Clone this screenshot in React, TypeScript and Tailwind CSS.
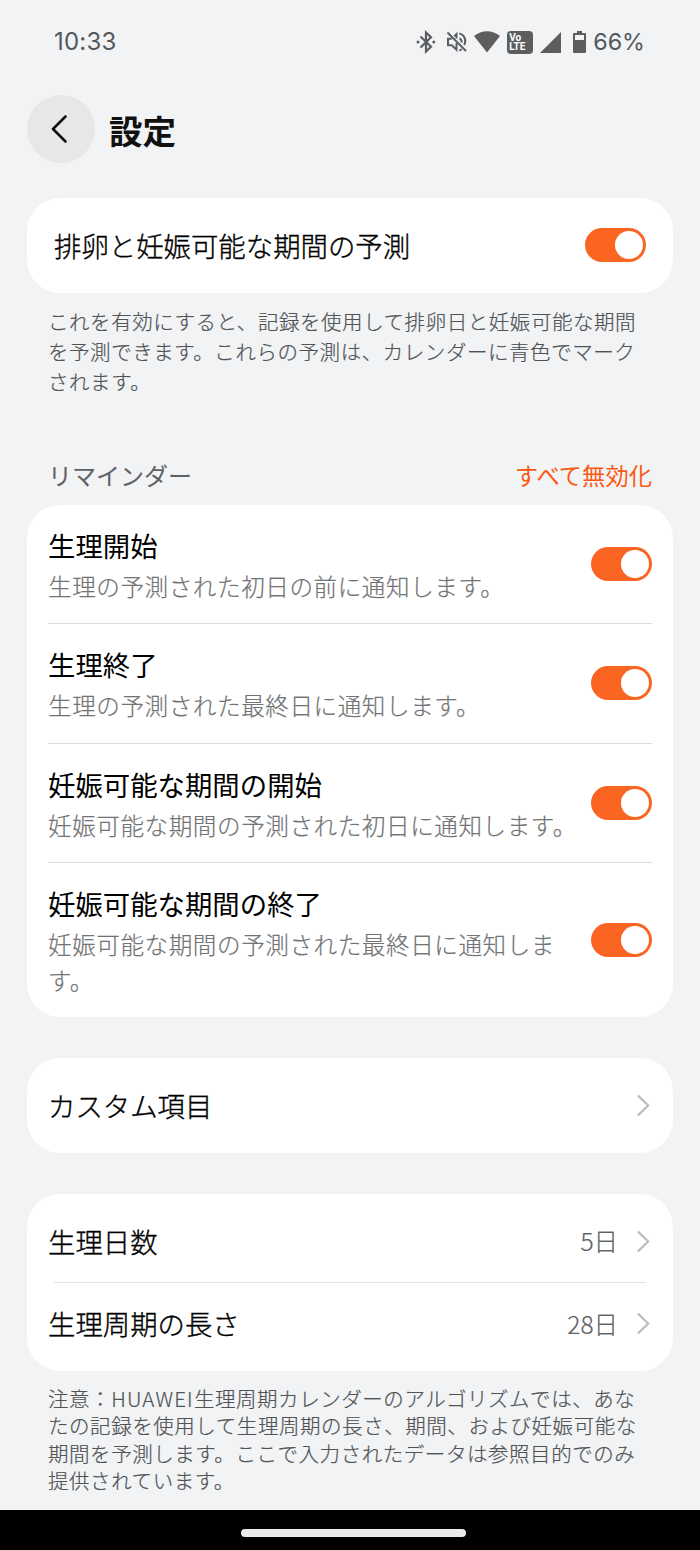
import { FC, ReactNode } from "react";

const Reminders = [
  {
    title: "生理開始",
    lines: ["生理の予測された初日の前に通知します。"],
  },
  {
    title: "生理終了",
    lines: ["生理の予測された最終日に通知します。"],
  },
  {
    title: "妊娠可能な期間の開始",
    lines: ["妊娠可能な期間の予測された初日に通知します。"],
  },
  {
    title: "妊娠可能な期間の終了",
    lines: ["妊娠可能な期間の予測された最終日に通知しま", "す。"],
  },
];

const PredictionHelp = [
  "これを有効にすると、記録を使用して排卵日と妊娠可能な期間",
  "を予測できます。これらの予測は、カレンダーに青色でマーク",
  "されます。",
];

const Notice = [
  "たの記録を使用して生理周期の長さ、期間、および妊娠可能な",
  "期間を予測します。ここで入力されたデータは参照目的でのみ",
  "提供されています。",
];

// a touch of stroke puts the light face between light and regular
const thin = "font-light [-webkit-text-stroke:0.2px_currentColor]";
const thinTitle = "font-light [-webkit-text-stroke:0.35px_currentColor]";

const Toggle: FC = () => (
  <button
    role="switch"
    aria-checked="true"
    className="flex h-[34px] w-[61px] shrink-0 items-center justify-end rounded-full bg-[#fb6522] pr-[3px]"
  >
    <span className="h-7 w-7 rounded-full bg-white" />
  </button>
);

const Chevron: FC = () => (
  <svg width="14" height="24" viewBox="0 0 14 24" fill="none" className="shrink-0">
    <path
      d="M1.5 2.1 11.2 11.5 1.5 20.9"
      stroke="#bcbdbe"
      strokeWidth="2.2"
      strokeLinecap="round"
      strokeLinejoin="round"
    />
  </svg>
);

const Card: FC<{ className: string; children: ReactNode }> = ({
  className,
  children,
}) => (
  <section className={`mx-[27px] rounded-[33px] bg-white ${className}`}>
    {children}
  </section>
);

const StatusBar: FC = () => (
  <div className="flex h-[84px] items-center justify-between pl-[54px] pr-14 font-['Inter','Noto_Sans',sans-serif] text-[24px] text-[#55585a]">
    <span className="tracking-[0.2px]">10:33</span>
    <div className="flex items-center">
      <svg width="20" height="24" viewBox="0 0 20 24" fill="none" stroke="#5b5d5f" strokeWidth="2.2">
        <path d="M4.5 6.5 15 16.8 10 21.5V2.5L15 7.2 4.5 17.5" />
        <circle cx="2" cy="12" r="1.5" fill="#5b5d5f" stroke="none" />
        <circle cx="17.8" cy="12" r="1.5" fill="#5b5d5f" stroke="none" />
      </svg>
      <svg width="22" height="22" viewBox="0 0 22 22" fill="none" stroke="#5b5d5f" strokeWidth="2" className="ml-2.5">
        <path d="M1.5 1.5 20 20" />
        <path d="M5.8 7.8H2v6.4h3.8l4.7 4.5V12M8.3 5.3l2.2-2.1v4.2" />
        <path d="M13.5 7.3c1.6.9 2.3 2.4 2.1 4.2M13.3 2.4c4.7 1.1 7.5 6.4 5 11.6M13.4 19.4c.9-.2 1.7-.6 2.4-1.1" />
      </svg>
      <svg width="26" height="22" viewBox="0 0 26 22" fill="#5b5d5f" className="ml-1.5">
        <path d="M0 5C7.6-1.3 18.4-1.3 26 5L13 21.5z" />
      </svg>
      <span className="ml-[7px] flex h-[23px] w-[26px] flex-col justify-center rounded-[4px] bg-[#5b5d5f] pl-0.5 font-['Roboto',sans-serif] text-[10px] font-bold leading-[9.5px] text-white">
        <span>Vo</span>
        <span>LTE</span>
      </span>
      <svg width="21" height="21" viewBox="0 0 21 21" fill="#5b5d5f" className="ml-[7px]">
        <path d="M21 0v21H0z" />
      </svg>
      <svg width="13" height="22" viewBox="0 0 13 22" className="ml-3">
        <path
          fill="#5b5d5f"
          fillRule="evenodd"
          d="M4 0h5v2h3a1 1 0 0 1 1 1v18a1 1 0 0 1-1 1H1a1 1 0 0 1-1-1V3a1 1 0 0 1 1-1h3zM2 4v5h9V4z"
        />
      </svg>
      <span className="-mr-px ml-[7px] pt-px text-[23.3px]">66%</span>
    </div>
  </div>
);

const App: FC = () => {
  return (
    <div className="flex h-[1550px] w-[700px] flex-col bg-[#f1f3f5] font-['Noto_Sans_CJK_JP',sans-serif] text-black">
      <StatusBar />

      {/* Title */}
      <header className="ml-[27px] mt-[11px] flex h-[68px] items-center">
        <button className="flex h-[68px] w-[68px] items-center rounded-full bg-[#e5e7e9] pl-6">
          <svg width="16" height="28" viewBox="0 0 16 28" fill="none">
            <path
              d="M14.5 1.5 2 14l12.5 12.5"
              stroke="#0c0c0c"
              strokeWidth="2.5"
              strokeLinecap="round"
              strokeLinejoin="round"
            />
          </svg>
        </button>
        <h1 className="ml-3.5 pt-0.5 text-[33.5px] font-bold leading-none text-[#111]">
          設定
        </h1>
      </header>

      <Card className="mt-[34.5px] flex h-[95px] items-center justify-between px-[27px]">
        <h2 className={`pt-0.5 text-[27.4px] ${thinTitle}`}>排卵と妊娠可能な期間の予測</h2>
        <Toggle />
      </Card>
      <div
        className={`ml-12 mt-[13px] whitespace-nowrap text-[20.5px] leading-[30px] tracking-[0.55px] text-[#505254] ${thin}`}
      >
        {PredictionHelp.map((line) => (
          <p key={line}>{line}</p>
        ))}
      </div>

      {/* Reminders */}
      <div className="mt-14 flex h-[53.5px] items-start justify-between px-12 leading-[45px]">
        <h2 className="text-[24px] text-[#5f6163]">リマインダー</h2>
        <button className="pt-px text-[23.3px] text-[#fb5a14]">すべて無効化</button>
      </div>
      <Card className="h-[512px] px-[21px]">
        {Reminders.map((item, i) => (
          <div
            key={item.title}
            className={`flex items-center justify-between ${
              i < Reminders.length - 1
                ? "h-[119.3px] border-b border-[#dcdddf]"
                : "h-[154px]"
            }`}
          >
            <div className="whitespace-nowrap pt-[1.5px]">
              <h3 className="mb-[3px] text-[27.4px] leading-[41px]">{item.title}</h3>
              <div
                className={`text-[23.6px] leading-[35.5px] tracking-[0.55px] text-[#717375] ${thin}`}
              >
                {item.lines.map((line) => (
                  <p key={line}>{line}</p>
                ))}
              </div>
            </div>
            <Toggle />
          </div>
        ))}
      </Card>

      <Card className="mt-[41px] flex h-[95px] items-center justify-between pl-[21px] pr-[22px]">
        <h2 className={`text-[27.4px] ${thinTitle}`}>カスタム項目</h2>
        <Chevron />
      </Card>

      {/* Cycle */}
      <Card className="mt-[41px] h-[177px]">
        <div className="flex h-[88px] items-center pl-[21px] pr-[22px] pt-[7px]">
          <h2 className={`grow text-[27.4px] ${thinTitle}`}>生理日数</h2>
          <span className={`mr-[19px] text-[24.5px] text-[#606264] ${thin}`}>5日</span>
          <Chevron />
        </div>
        <div className="mx-[27px] h-px bg-[#dfe0e2]" />
        <div className="flex h-[88px] items-center pb-[6px] pl-[21px] pr-[22px]">
          <h2 className={`grow text-[27.4px] ${thinTitle}`}>生理周期の長さ</h2>
          <span className={`mr-[19px] text-[24.5px] text-[#606264] ${thin}`}>28日</span>
          <Chevron />
        </div>
      </Card>
      <div
        className={`ml-12 mt-[13.5px] whitespace-nowrap text-[20.5px] leading-[27.5px] tracking-[0.55px] text-[#505254] ${thin}`}
      >
        <p>
          注意：<span className="tracking-[1.2px]">HUAWEI</span>
          生理周期カレンダーのアルゴリズムでは、あな
        </p>
        {Notice.map((line) => (
          <p key={line}>{line}</p>
        ))}
      </div>

      <footer className="mt-auto flex h-[40.5px] items-center justify-center bg-black pl-[7px] pt-1.5">
        <span className="h-2 w-[225px] rounded-full bg-[#ebe9e9]" />
      </footer>
    </div>
  );
};

export default App;
